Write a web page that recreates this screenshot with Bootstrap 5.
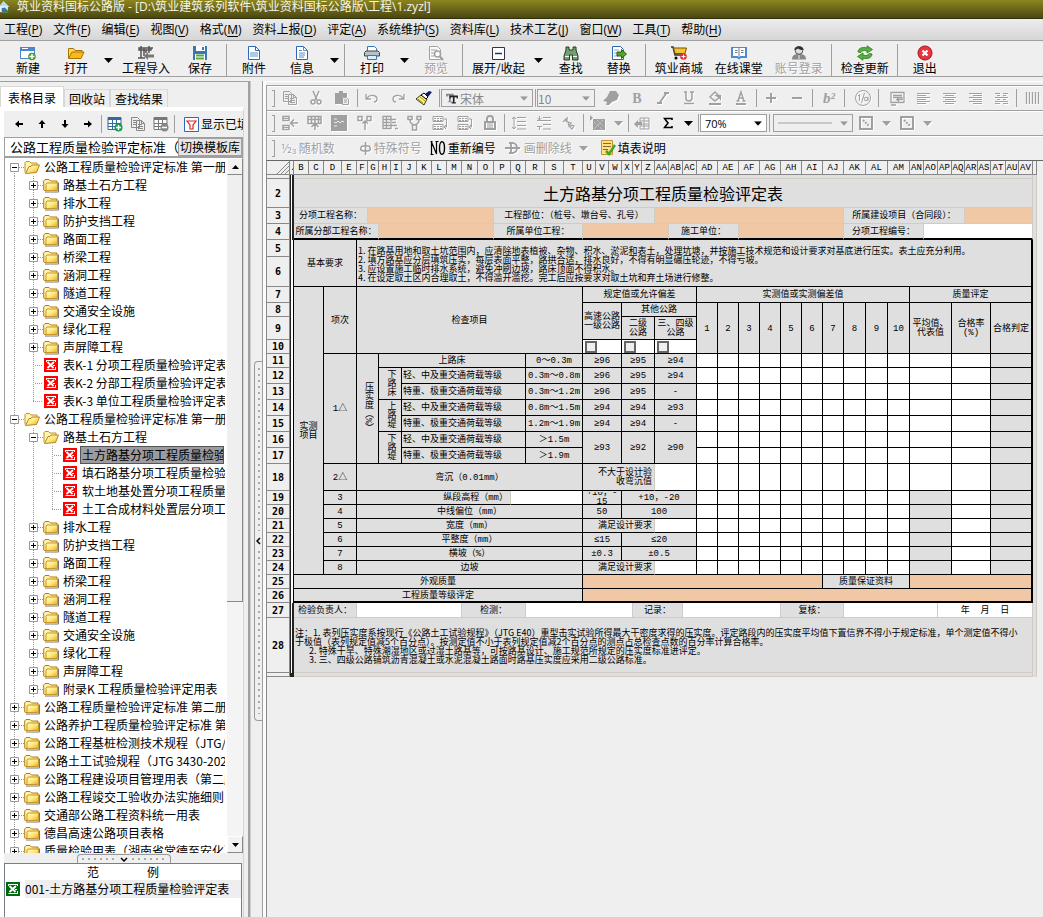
<!DOCTYPE html>
<html lang="zh-CN">
<head>
<meta charset="utf-8">
<meta name="viewport" content="width=device-width, initial-scale=1">
<title>筑业资料国标公路版</title>
<link href="https://cdn.jsdelivr.net/npm/bootstrap@5.3.0/dist/css/bootstrap.min.css" rel="stylesheet">
<style>
:root{--face:#efefef;--line:#a0a0a0;--cell:#dfdfdf;--fill:#f0c8a5;--soft:#d0ccc4}
body{font:12px/16px "Noto Sans CJK SC",sans-serif;color:#000;background:var(--face)}
svg{display:block;flex:none}
.app-title{height:19px;background:linear-gradient(#8b851f,#68631a 55%,#4a470f);border-bottom:1px solid #33310c;color:#f5f5e8;font:12px/13px "Open Sans","Noto Sans CJK SC",sans-serif;white-space:pre}
.app-menu{height:22px;background:linear-gradient(#ececec,#d6d6d6);border-bottom:1px solid var(--line);padding-left:4px;gap:11px}
.app-menu a{color:#000;text-decoration:none;font:12px/22px "Open Sans","Noto Sans CJK SC",sans-serif;white-space:nowrap}
.app-menu a u{text-underline-offset:2px}
.btn{--bs-btn-font-size:12px;--bs-btn-line-height:14px;--bs-btn-padding-x:0;--bs-btn-padding-y:0;--bs-btn-border-radius:0;--bs-btn-border-width:0;--bs-btn-color:#000;--bs-btn-disabled-color:#a0a0a0;--bs-btn-disabled-opacity:1;white-space:nowrap}
.main-bar{height:36px;padding:3px 0 0 4px;border-bottom:1px solid var(--line)}
.big-btn{min-width:48px;padding:0 6px}
.big-btn svg{margin:0 auto}
.big-btn:disabled{text-shadow:1px 1px 0 #fff}
.drop{width:16px;padding:0}
.vline{width:6px;flex:none;align-self:stretch;background:linear-gradient(var(--line),var(--line)) 2px 0/1px 100% no-repeat}
.vline.slim{width:4px}.vline.wide{width:8px}
.side{width:250px;flex:none;border-top:1px solid var(--line);border-right:2px solid var(--line);padding:4px 4px 0 0}
.side-tabs{height:21px;padding-left:0}
.side-tabs button{border:1px solid #d8d8d8;border-bottom:0;background:var(--face);font:12px/17px "Noto Sans CJK SC",sans-serif;padding:0 4px;height:18px;color:#000;white-space:nowrap}
.side-tabs .active{background:#fff;height:21px;padding:0 7px}
.side-page{border:1px solid #fff;border-width:4px 0 0 4px;border-right:1px solid #d4d4d4;background:var(--face)}
.side-tools{height:26px;margin-left:3px}
.side-tools button{width:23px;height:24px;flex:none}
.side-tools .filter-btn{width:auto;gap:2px}
.std{height:20px;border:1px solid var(--line);background:#fff}
.std input{border:0;min-width:0;font:13px/16px "Noto Sans CJK SC",sans-serif;padding:0 0 0 5px;outline:0}
.std button{border:1px solid var(--line);background:#e6e6e6;padding:0 1px}
.tree-box{border-left:1px solid var(--line);border-top:1px solid var(--line);background:#fff}
.tree{list-style:none;margin:0 2px 0 0;padding:0;width:0}
.tree li{height:18px;white-space:nowrap}
.unit{width:19px;height:18px;flex:none;display:flex;align-items:center;justify-content:center;background:repeating-linear-gradient(#999 0 1px,#fff 1px 2px) 9px 0/1px 100% no-repeat}
.unit.leaf{background:repeating-linear-gradient(#999 0 1px,#fff 1px 2px) 9px 0/1px 100% no-repeat,repeating-linear-gradient(90deg,#999 0 1px,#fff 1px 2px) 9px 9px/10px 1px no-repeat}
.unit.last{background:repeating-linear-gradient(#999 0 1px,#fff 1px 2px) 9px 0/1px 9px no-repeat,repeating-linear-gradient(90deg,#999 0 1px,#fff 1px 2px) 9px 9px/10px 1px no-repeat}
.unit.top-end{background:repeating-linear-gradient(#999 0 1px,#fff 1px 2px) 9px 9px/1px 9px no-repeat}
.node{padding:0 0 0 2px;margin-left:2px;height:18px;line-height:17px;color:#000;text-decoration:none}
.node.picked{background:#9b9ba0;border:1px solid #555;line-height:15px;padding-left:1px;width:144px;overflow:hidden}
.vscroll{width:16px;flex:none;background:#f4f4f4}
.vscroll button{width:16px;height:17px;background:#f2f2f2;border:1px solid #fff;border-right-color:#888;border-bottom-color:#888}
.vthumb{height:427px;background:var(--face);border-right:1px solid #888;border-bottom:1px solid #888}
.hgrip{height:10px}
.hgrip button{width:94px;height:9px;border:1px solid #999;border-bottom:0;border-radius:4px 4px 0 0;background:var(--face);color:#999}
.sample{height:54px;border:1px solid #777e8c;border-bottom:0;background:#fff;margin-right:1px}
.sample-row{height:18px}
.sample-row a{color:#000;text-decoration:none;background:#eee;margin-left:4px;line-height:18px}
.splitter{width:13px;flex:none;border-left:1px solid #ccc;border-right:1px solid var(--line);padding:84px 0 0 3px}
.splitter button{width:9px;height:360px;border:1px solid #999;border-right:0;border-radius:4px 0 0 4px;background:var(--face)}
.dots-v{width:2px;flex:1;margin:6px 0;background:repeating-linear-gradient(#aaa 0 2px,transparent 2px 6px)}
.dots-h{height:2px;flex:1;margin:0 4px;background:repeating-linear-gradient(90deg,#aaa 0 2px,transparent 2px 6px)}
.work{border-top:1px solid #fff;border-left:3px solid #fbfbfb;padding-top:3px;overflow:hidden}
.tool-row{height:25px;border-top:1px solid var(--line);border-left:1px solid var(--line);box-shadow:inset 0 1px #fff;padding-left:10px}
.tool-row::before{content:"";width:3px;height:17px;margin-left:-5px;margin-right:2px;border:1px solid var(--line);border-left:0;flex:none}
.tool-row .vline{margin:3px 0}
.b26{width:26px;flex:none}.b25{width:25px;flex:none}
.tool-row .btn svg{margin:0 auto}
.tool-row .btn:disabled{color:#a0a0a0}
.tool-row .btn:disabled svg{filter:drop-shadow(1px 1px 0 #fff)}
.letter-b{font:bold 14px/14px "Liberation Serif",serif}
.letter-sup{font:italic bold 15px/14px "Liberation Serif",serif}
.combo{height:18px;border:1px solid var(--line);padding:0 4px;flex:none;gap:2px}
.combo select{appearance:none;border:0;background:none;flex:1;min-width:0;padding:0;font:12px/15px "Noto Sans CJK SC",sans-serif;color:#888;opacity:1}
.combo.on{background:#fff}.combo.on select{color:#000;font:11px/15px "Open Sans",sans-serif}
.w-font{width:92px}.w-size{width:58px;margin-right:3px}.w-zoom{width:67px}.w-line{width:80px}
.word-btn{height:20px;gap:2px}
.word-btn:disabled{text-shadow:1px 1px 0 #fff}
.sheet-wrap{border-top:1px solid #666;border-left:1px solid #888}
.sheet{table-layout:fixed;width:769px;border-collapse:separate;border-spacing:0;font:9px/9px "Liberation Mono","Noto Sans CJK SC",monospace;background:var(--cell)}
.sheet td,.sheet th{padding:0;border:0 solid #000;border-width:0 1px 1px 0;text-align:center;vertical-align:middle;white-space:pre;overflow:hidden}
.sheet tbody td{padding-top:2px}
.sheet thead th{background:var(--face);border-color:#888;font-weight:400;height:14px;font-size:9px;padding-top:1px}
.sheet .rh{background:var(--face);border-color:#888;font:bold 10px/9px "DejaVu Sans Mono",monospace}
.sheet .edge{background:#fff;border-left:1px solid #222;border-bottom:0}
.sheet .edge.bold-edge{border-right:2px solid #222}
.sheet tr:last-child .edge{background:#222}
.sheet .loose{border-color:var(--soft)}
.sheet .tail{border-color:var(--soft);border-bottom:0}
.sheet .w{background:#fff}.sheet .o{background:var(--fill)}
.sheet .soft-r{border-right-color:var(--soft)}
.sheet .thick-b{border-bottom:2px solid #000}.sheet .thick-r{border-right:2px solid #000}
.sheet .ta-l{text-align:left;padding-left:1px}.sheet .ta-r{text-align:right;padding-right:2px}
.sheet .prose{font-family:"Noto Sans CJK SC",sans-serif}
.sheet .ttl{font:16px/18px "Noto Sans CJK SC",sans-serif}
.vert{writing-mode:vertical-rl;display:inline-block}
.clip{height:12px;display:flex;align-items:center;justify-content:center;overflow:hidden}
.sheet input{appearance:none;display:block;width:12px;height:12px;margin:0 0 0 2px;border:2px solid #666;background:var(--face)}
</style>
<script src="https://cdn.jsdelivr.net/npm/bootstrap@5.3.0/dist/js/bootstrap.bundle.min.js"></script>
</head>
<body class="vh-100 d-flex flex-column overflow-hidden">
<svg width="0" height="0" class="position-absolute" aria-hidden="true">
<defs>
<linearGradient id="gold" x1="0" y1="0" x2="1" y2="1"><stop offset="0" stop-color="#fffbd0"/><stop offset=".5" stop-color="#ffe97a"/><stop offset="1" stop-color="#e0a82c"/></linearGradient>
<symbol id="folder" viewBox="0 0 16 14"><path d="M2 13.500h13.500V4" stroke="#777" fill="none"/><path d="M.7 11.500v-9L2 1h4l1.500 1.500H14v9.500H1.500z" fill="url(#gold)" stroke="#b07d14"/><path d="M3 12V5.500l1-1h10.500v7.500z" fill="url(#gold)" stroke="#c8962a"/></symbol>
<symbol id="folder-open" viewBox="0 0 16 14"><path d="M1 12V2l1-1h3.500L7 2.500h6V6" fill="#fff6b0" stroke="#c09028"/><path d="M1.500 13 5 6h2l1-1.500h7.500L12.500 12z" fill="url(#gold)" stroke="#b88620"/></symbol>
<symbol id="sheet-x" viewBox="0 0 14 14"><path fill="currentColor" d="M0 0h14v14H0z"/><path d="M2.500 2.500h9" stroke="#fff"/><path d="M2.500 11.500h9M2.500 2v2M11.500 9v3M11.500 2v2" stroke="#fff"/><path d="m3.500 4 6 6M10 4l-6.500 6" stroke="#fff" stroke-width="1.800"/><path d="M9 7.500h2" stroke="#fff"/></symbol>
<symbol id="down" viewBox="0 0 9 5"><path d="M0 0h9L4.500 5z" fill="currentColor"/></symbol>
<symbol id="up" viewBox="0 0 9 5"><path d="M0 5h9L4.500 0z" fill="currentColor"/></symbol>
<symbol id="arrow" viewBox="0 0 8 8"><path d="M0 4 4 .5V3h4v2H4v2.500z" fill="#000"/></symbol>
<symbol id="pages" viewBox="0 0 16 16"><path d="M1.500 1.500h6l2 2v8h-8zM6.500 4.500h5l3 3v7h-8z" fill="#efefef" stroke="currentColor"/><path d="M3 4.500h3M3 6.500h3M3 8.500h3M8 8.500h4M8 10.500h5M8 12.500h5M11.500 4.500v3h3" stroke="currentColor" fill="none"/></symbol>
<symbol id="grid" viewBox="0 0 16 16"><path d="M1 1.500h13v12H1z" fill="#fff" stroke="currentColor"/><path fill="currentColor" d="M1 1h13v3H1z"/><path d="M1 7.500h13M1 10.500h13M5.500 4v9M9.500 4v9" stroke="currentColor"/></symbol>
<symbol id="boxcut" viewBox="0 0 16 16"><path d="M2 2h12v12H2z" fill="none" stroke="currentColor" stroke-width="2"/><path d="m5 5 6 6" stroke="currentColor" stroke-width="2" stroke-dasharray="2 1"/></symbol>
<symbol id="cells" viewBox="0 0 18 16"><path d="M2 1.500h6v4H2zM2 10.500h6v4H2zM10 8h7M13 4.500 9.500 8l3.500 3.500" fill="none" stroke="currentColor" stroke-width="1.500"/><path d="M2 3.500h6M2 12.500h6" stroke="currentColor"/></symbol>
<symbol id="cells2" viewBox="0 0 18 16"><path d="M2 1.500h13v7H2zM2 4.500h13M5.500 1v7M9 1v14M12.500 1v7M5.500 12 9 8.500l3.500 3.500" fill="none" stroke="currentColor" stroke-width="1.500"/></symbol>
<symbol id="branch" viewBox="0 0 18 16"><path d="M2 1.500h4v4H2zM11 1.500h4v4h-4zM6.500 8.500 9 6l3 2.500M9 7v8" fill="none" stroke="currentColor" stroke-width="1.500"/></symbol>
<symbol id="rows" viewBox="0 0 18 16"><path d="M2 1.500h10v5H2zM2 9.500h10v5H2z" fill="none" stroke="currentColor"/><path d="M3 3.500h9M3 5.500h9M3 11.500h9M3 13.500h9" stroke="currentColor" stroke-dasharray="2 1"/><path d="M13 4h2.500v8H13m2-2-2 2 2 2" fill="none" stroke="currentColor"/></symbol>
<symbol id="spacing" viewBox="0 0 16 16"><path d="M6 2.500h9M6 6.500h9M6 10.500h9M6 14h9M3 2v12M1 4l2-2 2 2M1 12l2 2 2-2" stroke="currentColor" fill="none"/></symbol>
</defs></svg>

<header class="app-title d-flex flex-shrink-0 overflow-hidden"><svg width="13" height="14" viewBox="0 0 15 14"><path d="M0 5 4 0l7 7H0z" fill="#b9dcf0"/><path d="M0 6h9v7H0z" fill="#e8eef4"/><path d="M5 13V7l6 6z" fill="#27933a"/><path d="M2 8h4v5H2z" fill="#3971b8"/></svg><span class="ms-1">筑业资料国标公路版 - [D:\筑业建筑系列软件\筑业资料国标公路版\工程\1.zyzl]</span></header>
<nav class="app-menu d-flex flex-shrink-0"><a href="#">工程(<u>P</u>)</a><a href="#">文件(<u>F</u>)</a><a href="#">编辑(<u>E</u>)</a><a href="#">视图(<u>V</u>)</a><a href="#">格式(<u>M</u>)</a><a href="#">资料上报(<u>D</u>)</a><a href="#">评定(<u>A</u>)</a><a href="#">系统维护(<u>S</u>)</a><a href="#">资料库(<u>L</u>)</a><a href="#">技术工艺(<u>J</u>)</a><a href="#">窗口(<u>W</u>)</a><a href="#">工具(<u>T</u>)</a><a href="#">帮助(<u>H</u>)</a></nav>

<div class="main-bar d-flex align-items-center flex-shrink-0" role="toolbar">
<button class="btn big-btn"><svg width="16" height="16" viewBox="0 0 16 16"><path d="M.5 2.500h14v11H.5z" fill="#fff" stroke="#4a86c8"/><path fill="#4a86c8" d="M0 2h15v4H0z"/><path d="M2 3.500h6" stroke="#fff"/><circle cx="12" cy="11.500" r="3.800" fill="#4f9a2e"/><path d="M12 9v5M9.500 11.500h5" stroke="#fff" stroke-width="1.500"/></svg>新建</button>
<button class="btn big-btn"><svg width="18" height="16" viewBox="0 0 18 16"><path d="M1.500 13V3.500h5l1.500 2h7V8" fill="#ffd84c" stroke="#a87408"/><path d="M1.500 13.500 5 7h12l-3 6.500z" fill="#f9b91a" stroke="#a87408"/></svg>打开</button>
<button class="btn drop" aria-label="打开选项"><svg class="mx-auto" width="9" height="5"><use href="#down"/></svg></button>
<button class="btn big-btn"><svg width="18" height="16" viewBox="0 0 18 16"><path d="M2 3h12v2H2zM4 1v12M12 1v7M1 13h7M7 3v8M14 3h2M9 5v3" stroke="#555" stroke-width="1.500" fill="none"/><path d="m7 11 4-4v2.500h6v3h-6V15z" fill="#777"/></svg>工程导入</button>
<button class="btn big-btn"><svg width="16" height="16" viewBox="0 0 16 16"><path d="M1 1h14v14H1z" fill="#3b76b5"/><path fill="#fff" d="M4 1h9v5H4zM3 9h10v6H3z"/><path fill="#3b76b5" d="M10 2h2v3h-2z"/><path d="M4 10.500h8M4 13.500h8" stroke="#5aa43a" stroke-width="2"/></svg>保存</button>
<span class="vline"></span>
<button class="btn big-btn"><svg width="16" height="16" viewBox="0 0 16 16"><path d="M2.500 1.500h7l4 4v9h-11z" fill="#fff" stroke="#2f68b0"/><path d="M9.500 1.500v4h4" fill="none" stroke="#2f68b0"/><path d="M4 7h8v5H4z" fill="#a8cbea"/></svg>附件</button>
<button class="btn big-btn"><svg width="16" height="16" viewBox="0 0 16 16"><path d="M2.500 1.500h7l4 4v9h-11z" fill="#fff" stroke="#2f68b0"/><path d="M9.500 1.500v4h4M5 5.500h3M5 8h6M5 10h6M5 12h5" fill="none" stroke="#5f8cc8"/></svg>信息</button>
<button class="btn drop" aria-label="信息选项"><svg class="mx-auto" width="9" height="5"><use href="#down"/></svg></button>
<span class="vline"></span>
<button class="btn big-btn"><svg width="16" height="16" viewBox="0 0 16 16"><path d="M3.500 7V1.500h7l2 2V7" fill="#fff" stroke="#3b76b5"/><path d="M.5 7.500 2 6h12l1.500 1.500V11H.5z" fill="#b8c0c8" stroke="#444"/><path d="M3.500 10.500h9v4h-9z" fill="#d8efff" stroke="#3b76b5"/></svg>打印</button>
<button class="btn drop" aria-label="打印选项"><svg class="mx-auto" width="9" height="5"><use href="#down"/></svg></button>
<button class="btn big-btn" disabled><svg width="16" height="16" viewBox="0 0 16 16"><path d="M1.500 1.500h8l3 3v10h-11zM3 5h6M3 8h3M3 11h3" fill="#fafafa" stroke="#a0a0a0"/><circle cx="9.500" cy="9" r="3" fill="#fff" stroke="#a0a0a0" stroke-width="1.500"/><path d="m11.500 11 3.500 4" stroke="#a0a0a0" stroke-width="2"/></svg>预览</button>
<span class="vline"></span>
<button class="btn big-btn"><svg width="16" height="16" viewBox="0 0 16 16"><path d="M2.500 2.500h12v12h-12z" fill="#fff" stroke="#334"/><path d="M5 8.500h7" stroke="#113a80" stroke-width="1.500"/></svg>展开/收起</button>
<button class="btn drop" aria-label="展开选项"><svg class="mx-auto" width="9" height="5"><use href="#down"/></svg></button>
<button class="btn big-btn"><svg width="16" height="16" viewBox="0 0 16 16"><path d="M3 2h3v3h4V2h3v3l2 6v4H9.500v-5h-3v5H1v-4l2-6z" fill="#6fa26f" stroke="#263a26"/><path d="M2 11.500h4M10 11.500h4" stroke="#fff"/></svg>查找</button>
<button class="btn big-btn"><svg width="16" height="16" viewBox="0 0 16 16"><path d="M1.500 1.500h8l3 3v10h-11z" fill="#fff" stroke="#2f68b0"/><path d="M3 5h5M3 8h3M3 11h4" stroke="#7da8dc"/><path d="m15.500 9-5 4.500V11H6V7h4.500V4.500z" fill="#52a62e" stroke="#27610f"/></svg>替换</button>
<span class="vline"></span>
<button class="btn big-btn"><svg width="18" height="16" viewBox="0 0 18 16"><path d="M1 2h2l2 8h10" fill="none" stroke="#333" stroke-width="1.500"/><path d="M3.500 3h13L15 8.500H5z" fill="#f5c330" stroke="#765000"/><circle cx="6" cy="13" r="1.500"/><circle cx="13.500" cy="11.500" r="3.300" fill="#e63030"/><path d="M11.500 11.500h4M13.500 9.500v4" stroke="#fff"/></svg>筑业商城</button>
<button class="btn big-btn"><svg width="16" height="16" viewBox="0 0 16 16"><path d="M0 2h16v11h-6l-2 1.500L6 13H0z" fill="#4a8cd2"/><path d="M2 3h5l1 1 1-1h5v8H9l-1 1-1-1H2z" fill="#fff"/><path d="M8 4v7M4 5.500h2.500M4 7.500h2.500M10 5.500h2.500M10 7.500h2.500" stroke="#777"/></svg>在线课堂</button>
<button class="btn big-btn" disabled><svg width="16" height="16" viewBox="0 0 16 16"><path d="M1 14.500C1 10 4 9 8 9s7 1 7 5.500z" fill="#888"/><circle cx="8" cy="5.500" r="3.800" fill="#ddd" stroke="#555"/><path d="M3.500 5C3 0 13 0 12.500 5 10 5.500 8 4 7 3.500 6 4 5 5 3.500 5z" fill="#333"/><path d="M8 10v4" stroke="#bbb" stroke-width="2"/></svg>账号登录</button>
<span class="vline"></span>
<button class="btn big-btn"><svg width="16" height="16" viewBox="0 0 16 16"><path d="M1 7C1 3 6 1.500 10 3V.8L15.500 4.500 10 8V6C7 5 4.500 5.500 4 7.500zM15 9c0 4-5 5.500-9 4v2.200L.5 11.500 6 8v2c3 1 5.500.5 6-1.500z" fill="#55b040" stroke="#2b7a1f" stroke-width=".8"/></svg>检查更新</button>
<span class="vline"></span>
<button class="btn big-btn"><svg width="16" height="16" viewBox="0 0 16 16"><circle cx="8" cy="8" r="7" fill="#e9343d" stroke="#a3141c"/><path d="M5.500 5.500 10.500 10.500M10.500 5.500 5.500 10.500" stroke="#fff" stroke-width="2.200"/></svg>退出</button>
</div>

<main class="d-flex flex-grow-1 pt-1" style="min-height:0">
<aside class="side d-flex flex-column">
<div class="side-tabs d-flex align-items-end flex-shrink-0" role="tablist"><button class="active" role="tab">表格目录</button><button role="tab">回收站</button><button role="tab">查找结果</button></div>
<div class="side-page d-flex flex-column flex-grow-1" style="min-height:0">
<div class="side-tools d-flex align-items-center overflow-hidden flex-shrink-0">
<button class="btn" aria-label="左"><svg class="mx-auto" width="8" height="8"><use href="#arrow"/></svg></button>
<button class="btn" aria-label="上"><svg class="mx-auto" width="8" height="8" viewBox="0 0 8 8"><path d="M4 0 .5 4H3v4h2V4h2.500z"/></svg></button>
<button class="btn" aria-label="下"><svg class="mx-auto" width="8" height="8" viewBox="0 0 8 8"><path d="M4 8 .5 4H3V0h2v4h2.500z"/></svg></button>
<button class="btn" aria-label="右"><svg class="mx-auto" width="8" height="8" viewBox="0 0 8 8"><path d="M8 4 4 .5V3H0v2h4v2.500z"/></svg></button>
<span class="vline slim my-1"></span>
<button class="btn" aria-label="增加表格"><svg class="mx-auto" width="16" height="16" viewBox="0 0 16 16"><use href="#grid" width="16" height="16" color="#35689c"/><circle cx="11.500" cy="11.500" r="4" fill="#1e9850"/><path d="M9 11.500h5M11.500 9v5" stroke="#fff" stroke-width="1.500"/></svg></button>
<button class="btn" aria-label="复制表格"><svg class="mx-auto" width="16" height="16" color="#888"><use href="#pages"/></svg></button>
<button class="btn" aria-label="删除表格"><svg class="mx-auto" width="16" height="16" viewBox="0 0 16 16"><use href="#grid" width="16" height="16" color="#777"/><circle cx="11.500" cy="11.500" r="4" fill="#888"/><path d="M9 11.500h5" stroke="#fff" stroke-width="1.500"/></svg></button>
<span class="vline slim my-1"></span>
<button class="btn filter-btn ms-2 d-flex align-items-center"><svg width="15" height="15" viewBox="0 0 15 15"><path d="M.5.500h14v14H.5z" fill="#fff" stroke="#2f68b0"/><path d="M3 4h9L9 8v4H6V8z" fill="none" stroke="#e62020" stroke-width="1.200"/></svg>显示已填</button>
</div>
<div class="std d-flex flex-shrink-0"><input class="flex-grow-1" aria-label="当前标准" value="公路工程质量检验评定标准（第一册）"><button class="btn">切换模板库</button></div>
<div class="tree-box d-flex flex-grow-1 overflow-hidden">
<ul class="tree flex-grow-1 overflow-hidden" id="tree"></ul>
<div class="vscroll d-flex flex-column"><button class="btn flex-shrink-0" aria-label="向上滚动"><svg class="mx-auto" width="7" height="4" viewBox="0 0 9 5"><use href="#up"/></svg></button><div class="vthumb"></div><button class="btn mt-auto flex-shrink-0" aria-label="向下滚动"><svg class="mx-auto" width="7" height="4" viewBox="0 0 9 5"><use href="#down"/></svg></button></div>
</div>
<div class="hgrip d-flex justify-content-center align-items-end flex-shrink-0"><button class="btn d-flex align-items-center" aria-label="折叠范例"><span class="dots-h"></span><svg width="8" height="5" viewBox="0 0 8 5"><path d="m1 1 3 3 3-3" stroke="#000" stroke-width="1.500" fill="none"/></svg><span class="dots-h"></span></button></div>
<div class="sample flex-shrink-0"><div class="d-flex justify-content-center gap-5"><span>范</span><span>例</span></div>
<div class="sample-row d-flex align-items-center text-nowrap"><svg color="#006a10" width="16" height="14"><use href="#sheet-x"/></svg><a href="#" class="flex-grow-1">001-土方路基分项工程质量检验评定表</a></div></div>
</div>
</aside>
<div class="splitter d-flex align-items-center"><button class="btn d-flex flex-column align-items-center" aria-label="折叠目录"><span class="dots-v"></span><svg width="5" height="8" viewBox="0 0 5 8"><path d="M4 1 1 4l3 3" stroke="#000" stroke-width="1.500" fill="none"/></svg><span class="dots-v"></span></button></div>

<section class="work flex-grow-1 d-flex flex-column" style="min-width:0">
<div class="tool-row d-flex align-items-center flex-shrink-0">
<button class="btn b26" disabled aria-label="复制"><svg width="18" height="16" viewBox="0 0 16 16"><use href="#pages"/></svg></button>
<button class="btn b26" disabled aria-label="剪切"><svg width="14" height="16" viewBox="0 0 14 16"><path d="M4 1l4 9M10 1 6 10" stroke="currentColor" stroke-width="1.500"/><circle cx="4" cy="12" r="2" fill="none" stroke="currentColor" stroke-width="1.500"/><circle cx="10" cy="12" r="2" fill="none" stroke="currentColor" stroke-width="1.500"/></svg></button>
<button class="btn b26" disabled aria-label="粘贴"><svg width="16" height="16" viewBox="0 0 16 16"><path d="M1 3h4V1h4v2h4v4H8v7H1z" fill="currentColor"/><path d="M8.500 7.500h4l2 2v5h-6zM10 10h3M10 12h3" fill="#eee" stroke="currentColor"/></svg></button>
<span class="vline slim"></span>
<button class="btn b26" disabled aria-label="撤销"><svg width="14" height="12" viewBox="0 0 14 12"><path d="M1 2v5h5M2 6c3-4 10-3 10 1 0 2-1 3-3 3" fill="none" stroke="currentColor" stroke-width="1.300"/></svg></button>
<button class="btn b26" disabled aria-label="重做"><svg width="14" height="12" viewBox="0 0 14 12"><path d="M13 2v5H8M12 6C9 2 2 3 2 7c0 2 1 3 3 3" fill="none" stroke="currentColor" stroke-width="1.300"/></svg></button>
<button class="btn b26" aria-label="格式刷"><svg width="18" height="16" viewBox="0 0 18 16"><path d="M1 9 6 5l6 4-3 6z" fill="#fff27a" stroke="#333"/><path d="m3 9 5 4m-3-6 5 4" stroke="#a49500"/><path d="m6 5 3-2 4 4-2 2z" fill="#fff" stroke="#000"/><path d="m10 4 4-3 3 1-4 5z" fill="#101a70"/></svg></button>
<span class="vline slim"></span>
<div class="combo w-font d-flex align-items-center"><svg width="12" height="11" viewBox="0 0 14 13"><path d="M0 1h9v3H7V3H5.500v7H7v1H2v-1h1.500V3H2v1H0z" fill="#888"/><path d="M4 3h10v3.500h-1.500V5h-2.500v6h1.500v1.500h-5V11H8V5H5.500v1.500H4z" fill="#222"/></svg><select disabled aria-label="字体"><option>宋体</option></select><svg width="8" height="5" color="#999" viewBox="0 0 9 5"><use href="#down"/></svg></div>
<span class="vline slim"></span>
<div class="combo w-size d-flex align-items-center ps-0"><select disabled aria-label="字号"><option>10</option></select><svg width="8" height="5" color="#999" viewBox="0 0 9 5"><use href="#down"/></svg></div>
<button class="btn b26" disabled aria-label="底色"><svg width="16" height="16" viewBox="0 0 16 16"><path d="M4 7 7 1h6l3 4-2 5-5 2-3 3H3l1-3-4-1z" fill="currentColor"/></svg></button>
<button class="btn b26" disabled aria-label="加粗"><b class="letter-b">B</b></button>
<button class="btn b26" disabled aria-label="倾斜"><svg width="14" height="14" viewBox="0 0 14 14"><path d="M8 2h5M1 12h5M10.500 2 3.500 12" stroke="currentColor" stroke-width="1.800"/></svg></button>
<button class="btn b26" disabled aria-label="下划线"><svg width="12" height="14" viewBox="0 0 12 14"><path d="M1 1h3M7 1h4M3 1v6q0 3 3 3t3-3V1M1 12.500h10" fill="none" stroke="currentColor" stroke-width="1.500"/></svg></button>
<button class="btn b26" disabled aria-label="填充颜色"><svg width="15" height="16" viewBox="0 0 15 16"><path d="m2 7 5-5 5 5-5 4z" fill="none" stroke="currentColor" stroke-width="1.500"/><path d="M6 5h7v6l-2-3zM1 13h12v2H1z" fill="currentColor"/></svg></button>
<button class="btn b26" disabled aria-label="字体颜色"><svg width="12" height="16" viewBox="0 0 12 16"><path d="m3 11 3-9 3 9M4 8h4M1.500 11h3M7.500 11h3" fill="none" stroke="currentColor" stroke-width="1.500"/><path d="M1 13h10v2H1z" fill="currentColor"/></svg></button>
<span class="vline slim"></span>
<button class="btn b26" disabled aria-label="增大"><svg width="12" height="12" viewBox="0 0 12 12"><path d="M6 1v10M1 6h10" stroke="currentColor" stroke-width="2"/></svg></button>
<button class="btn b26" disabled aria-label="减小"><svg width="12" height="12" viewBox="0 0 12 12"><path d="M1 6h10" stroke="currentColor" stroke-width="2"/></svg></button>
<span class="vline"></span>
<button class="btn b26" disabled aria-label="上标"><i class="letter-sup">b²</i></button>
<span class="vline wide"></span>
<button class="btn b26" disabled aria-label="分数"><svg width="18" height="18" viewBox="0 0 18 18"><circle cx="9" cy="9" r="7.500" fill="none" stroke="currentColor"/><path d="M4 7l1.500-1.500V12M10.500 4l-3 10" stroke="currentColor" fill="none"/><circle cx="12" cy="10" r="1.800" fill="none" stroke="currentColor"/><path d="M14 8v4" stroke="currentColor"/></svg></button>
<span class="vline wide"></span>
<button class="btn b26" disabled aria-label="换行"><svg width="15" height="15" viewBox="0 0 15 15"><path d="M1 1.500h13v10H1zM3 4.500h9M3 6.500h9v2H7l2-2M7 8.500l2 2M1 14h5" fill="none" stroke="currentColor" stroke-width="1.300"/></svg></button>
<button class="btn b26" disabled aria-label="左对齐"><svg width="15" height="13" viewBox="0 0 15 13"><path d="M1 1.500h13M1 3.500h9M1 5.500h13M1 7.500h9M1 9.500h13M1 11.500h9" stroke="currentColor"/></svg></button>
<button class="btn b26" disabled aria-label="居中"><svg width="15" height="13" viewBox="0 0 15 13"><path d="M1 1.500h13M3 3.500h9M1 5.500h13M3 7.500h9M1 9.500h13M3 11.500h9" stroke="currentColor"/></svg></button>
<button class="btn b26" disabled aria-label="右对齐"><svg width="15" height="13" viewBox="0 0 15 13"><path d="M1 1.500h13M5 3.500h9M1 5.500h13M5 7.500h9M1 9.500h13M5 11.500h9" stroke="currentColor"/></svg></button>
<button class="btn b26" disabled aria-label="两端对齐"><svg width="15" height="13" viewBox="0 0 15 13"><path d="M1 1.500h5M9 1.500h5M3 3.500h3M9 3.500h3M1 5.500h13M3 7.500h3M9 7.500h3M1 9.500h13M1 11.500h5M9 11.500h5" stroke="currentColor"/></svg></button>
<span class="vline"></span>
<button class="btn b26" disabled aria-label="分散"><svg width="16" height="13" viewBox="0 0 16 13"><path d="M1.500 0v12M4.500 0v12M7.500 0v12M10.500 0v12M13.500 0v12" stroke="currentColor" stroke-width="1.300"/></svg></button>
</div>
<div class="tool-row d-flex align-items-center flex-shrink-0">
<button class="btn b25" disabled aria-label="插入单元格"><svg width="18" height="16"><use href="#cells"/></svg></button>
<button class="btn b25" disabled aria-label="插入行"><svg width="18" height="16"><use href="#cells2"/></svg></button>
<button class="btn b25" disabled aria-label="公式"><svg width="17" height="16" viewBox="0 0 17 16"><path fill="currentColor" d="M0 0h16v16H0z"/><path d="M3 4h3M3 11h3M3 7l2 1 2-2 2 2 2-2 2 1" stroke="#eee" fill="none"/></svg></button>
<button class="btn b25" disabled aria-label="拆分"><svg width="18" height="16"><use href="#branch"/></svg></button>
<button class="btn b25" disabled aria-label="删除单元格"><svg width="18" height="16" viewBox="0 0 18 16"><path d="M2 1.500h8v12H2zM2 4.500h13M2 7.500h7M9 10.500h7M2 10.500h7M5.500 1v12M11 7.500h4M14 13.500h3" fill="none" stroke="currentColor" stroke-width="1.300"/></svg></button>
<button class="btn b25" disabled aria-label="合并"><svg width="18" height="16" viewBox="0 0 18 16"><path d="M2 1.500h4v3H2zM11 1.500h4v3h-4zM4 5q0 4 4.500 5Q13 9 13 5M6.500 10h4v5h-4z" fill="none" stroke="currentColor" stroke-width="1.500"/></svg></button>
<button class="btn b25" disabled aria-label="下移"><svg width="18" height="16"><use href="#rows"/></svg></button>
<button class="btn b25" disabled aria-label="复制行"><svg width="18" height="16"><use href="#rows"/></svg></button>
<button class="btn b25" disabled aria-label="锁定"><svg width="14" height="16" viewBox="0 0 14 16"><path d="M4 7V4q0-3 3-3t3 3v3M2 7h10v7H2z" fill="none" stroke="currentColor" stroke-width="2"/><path d="M5 8v5M7 8v5M9 8v5" stroke="currentColor"/></svg></button>
<span class="vline slim"></span>
<button class="btn b25" disabled aria-label="行距"><svg width="16" height="16"><use href="#spacing"/></svg></button>
<button class="btn b25" disabled aria-label="间距"><svg width="16" height="16" viewBox="0 0 16 16"><path d="M7 2.500h8M1 5.500h14M7 9.500h8M1 11.500h5M7 14h8M3.500 1v4l-2-2m2 2 2-2M3.500 15v-3" stroke="currentColor" fill="none"/></svg></button>
<button class="btn b25" disabled aria-label="文字方向"><svg width="14" height="15" viewBox="0 0 14 15"><path d="m1 6 4-4v4M3 4l2 2M6 6l3 1-2 3zM10 9l2 1-2 3-2-2z" fill="none" stroke="currentColor" stroke-width="1.300"/></svg></button>
<span class="vline slim"></span>
<button class="btn b25" disabled aria-label="图片"><svg width="17" height="16" viewBox="0 0 17 16"><path d="M1 0v6l3-3z" fill="currentColor"/><path d="M4 4h12v11H4z" fill="currentColor"/><path d="m5 7 9 8M8 5l7 7M14 5l-9 9" stroke="#ddd" stroke-dasharray="1 1"/></svg></button>
<button class="btn drop" disabled aria-label="图片选项"><svg width="9" height="5"><use href="#down"/></svg></button>
<span class="vline slim"></span>
<button class="btn b25" disabled aria-label="重算"><svg width="17" height="16" viewBox="0 0 17 16"><path d="M6 3h9v11H6zM6 6h9M6 9h9M6 11h9M10 3v11" fill="none" stroke="currentColor"/><path d="M0 9 4 5v2h4v3H4v3z" fill="currentColor"/></svg></button>
<button class="btn b25" aria-label="求和"><svg width="10" height="12" viewBox="0 0 10 12"><path d="M9 3V1.500H1.500L5 6l-3.500 4.500H9V9" fill="none" stroke="#000" stroke-width="1.600"/></svg></button>
<button class="btn drop" aria-label="求和选项"><svg class="mx-auto" width="9" height="5"><use href="#down"/></svg></button>
<span class="vline slim"></span>
<div class="combo on w-zoom d-flex align-items-center"><select aria-label="缩放"><option>70%</option></select><svg width="8" height="5" viewBox="0 0 9 5"><use href="#down"/></svg></div>
<span class="vline"></span>
<div class="combo w-line d-flex align-items-center"><svg width="54" height="2"><path d="M0 1h54" stroke="#a0a0a0"/></svg><select disabled aria-label="线型"><option></option></select><svg width="8" height="5" color="#999" viewBox="0 0 9 5"><use href="#down"/></svg></div>
<button class="btn b25" disabled aria-label="边框"><svg width="16" height="16"><use href="#boxcut"/></svg></button>
<button class="btn drop" disabled aria-label="边框选项"><svg width="9" height="5"><use href="#down"/></svg></button>
<button class="btn b25" disabled aria-label="斜线"><svg width="16" height="16"><use href="#boxcut"/></svg></button>
<button class="btn drop" disabled aria-label="斜线选项"><svg width="9" height="5"><use href="#down"/></svg></button>
</div>
<div class="tool-row d-flex align-items-center flex-shrink-0">
<button class="btn word-btn d-flex align-items-center ms-1" disabled><span>½₃</span>随机数</button>
<button class="btn word-btn d-flex align-items-center ms-4" disabled><svg width="13" height="13" viewBox="0 0 13 13"><path d="M6.500 0v13M3 4q-4 5 3.500 5T10 4H3" fill="none" stroke="currentColor" stroke-width="1.500"/></svg>特殊符号</button>
<button class="btn word-btn d-flex align-items-center ms-2"><svg width="16" height="14" viewBox="0 0 15 14"><path d="M1 14V1l5 12V0M0 .5h2M0 13.500h3M5 .5h3" fill="none" stroke="#000" stroke-width="1.200"/><ellipse cx="11.500" cy="7" rx="2.500" ry="6.200" fill="none" stroke="#000" stroke-width="1.400"/></svg>重新编号</button>
<button class="btn word-btn d-flex align-items-center ms-2" disabled><svg width="18" height="14" viewBox="0 0 16 14"><path d="M4 2h4q4 1 4 5t-4 5H4M6 2v10M0 7h15" fill="none" stroke="currentColor" stroke-width="1.800"/></svg>画删除线</button>
<button class="btn drop ms-1" disabled aria-label="删除线选项"><svg width="9" height="5"><use href="#down"/></svg></button>
<button class="btn word-btn d-flex align-items-center ms-2"><svg width="16" height="16" viewBox="0 0 16 16"><path d="M1.500.5h11v14h-11z" fill="#ffdf87" stroke="#c89428"/><path d="M3 3.500h8M3 6.500h8M3 9.500h5" stroke="#8c6a20"/><path d="m6 11 3 3 6-9" fill="none" stroke="#41a629" stroke-width="2.500"/></svg>填表说明</button>
</div>
<div class="sheet-wrap flex-grow-1 overflow-hidden"><table class="sheet" id="sheet"></table></div>
</section>
</main>

<script>
// Catalogue tree: [level, kind, text]; kinds are open, closed and doc
const subs = ['排水工程','防护支挡工程','路面工程','桥梁工程','涵洞工程','隧道工程','交通安全设施','绿化工程','声屏障工程'];
const nodes = [
  [0,'open','公路工程质量检验评定标准 第一册'],
  [1,'closed','路基土石方工程'], ...subs.map(s => [1,'closed',s]),
  [1,'doc','表K-1 分项工程质量检验评定表'],[1,'doc','表K-2 分部工程质量检验评定表'],[1,'doc','表K-3 单位工程质量检验评定表','last'],
  [0,'open','公路工程质量检验评定标准 第一册'],
  [1,'open','路基土石方工程'],
  [2,'doc','土方路基分项工程质量检验评定表','picked'],[2,'doc','填石路基分项工程质量检验评定表'],
  [2,'doc','软土地基处置分项工程质量检验评定表'],[2,'doc','土工合成材料处置层分项工程质量检验','last'],
  ...subs.map(s => [1,'closed',s]), [1,'closed','附录K 工程质量检验评定用表'],
  ...['公路工程质量检验评定标准 第二册','公路养护工程质量检验评定标准 第一册','公路工程基桩检测技术规程（JTG/T','公路土工试验规程（JTG 3430-2020）','公路工程建设项目管理用表（第二版）','公路工程竣交工验收办法实施细则','交通部公路工程资料统一用表','德昌高速公路项目表格','质量检验用表（湖南省常德至安化）'].map(s => [0,'closed',s])
];
const box = plus => `<svg width="19" height="9" viewBox="0 0 19 9"><path d="M14 4.500h5" stroke="#999" stroke-dasharray="1 1"/><path d="M5.500.5h8v8h-8z" fill="#fff" stroke="#999"/><path d="M7 4.500h5${plus ? 'M9.500 2v5' : ''}" stroke="#000"/></svg>`;
document.getElementById('tree').innerHTML = nodes.map(([lv, kind, text, flag], i) => {
  let h = '<span class="unit"></span>'.repeat(lv);
  if (kind === 'doc') {
    h += `<span class="unit leaf${flag === 'last' ? ' last' : ''}"></span><svg width="16" height="14" color="#f00"><use href="#sheet-x"/></svg>`;
  } else {
    h += `<span class="unit${i === 0 ? ' top-end' : ''}">${box(kind === 'closed')}</span><svg width="16" height="15"><use href="#${kind === 'open' ? 'folder-open' : 'folder'}"/></svg>`;
  }
  return `<li class="d-flex align-items-center">${h}<a href="#" class="node${flag === 'picked' ? ' picked' : ''}">${text}</a></li>`;
}).join('');

// Column names and widths of the sheet
const names = ['','.','B','C','D','E','F','G','H','I','J','K','L','M','N','O','P','Q','R','S','T','U','V','W','X','Y','Z','AA','AB','AC','AD','AE','AF','AG','AH','AI','AJ','AK','AL','AM','AN','AO','AP','AQ','AR','AS','AT','AU','AV',''];
const widths = [23,4,15,15,18,15,11,11,12,11,15,15,15,15,16,16,17,15,19,19,19,13,13,13,11,9,13,14,14,14,21,21,21,21,21,21,21,22,22,22,14,14,14,13,13,13,15,13,14,4];
const c = (t, cs = 1, k = '', rs = 1) => `<td${cs > 1 ? ` colspan="${cs}"` : ''}${rs > 1 ? ` rowspan="${rs}"` : ''}${k ? ` class="${k}"` : ''}>${t}</td>`;
const v = (t, rs) => c(`<span class="vert">${t}</span>`, 2, 'p-0', rs);
const rep = (n, s) => s.repeat(n);
const blank = mid => rep(10, c('', 1, 'w')) + c('', 3, mid) + c('', 3, 'w') + c('', 3, 'thick-r');
const tick = n => c(`<input type="checkbox" aria-label="${n}">`, 3, 'w p-0');
const three = (a, b, d, rs = 1) => c(a, 3, '', rs) + c(b, 3, '', rs) + c(d, 3, '', rs);
const L = 'loose';
const rows = [
 ['',4,c('',47,L)],
 [2,29,c('土方路基分项工程质量检验评定表',47,L+' ttl p-0')],
 [3,16,c('分项工程名称：',5,L)+c('',9,L+' o')+c('工程部位：（桩号、墩台号、孔号）',11,L)+c('',10,L+' o')+c('所属建设项目（合同段）：',7,L)+c('',5,L+' o')],
 [4,16,c('所属分部工程名称：',6,'thick-b soft-r')+c('',8,'thick-b soft-r o')+c('所属单位工程：',5,'thick-b soft-r')+c('',7,'thick-b soft-r o')+c('施工单位：',4,'thick-b soft-r')+c('',5,'thick-b soft-r o')+c('分项工程编号：',4,'thick-b soft-r')+c('',8,'thick-b soft-r w')],
 [5,17,c('基本要求',4,'',2)+c('1. 在路基用地和取土坑范围内，应清除地表植被、杂物、积水、淤泥和表土，处理坑塘，并按施工技术规范和设计要求对基底进行压实。表土应充分利用。\n2. 填方路基应分层填筑压实，每层表面平整，路拱合适，排水良好，不得有明显碾压轮迹，不得亏坡。\n3. 应设置施工临时排水系统，避免冲刷边坡，路床顶面不得积水。\n4. 在设定取土区内合理取土，不得滥开滥挖。完工后应按要求对取土坑和弃土场进行修整。',43,'prose ta-l thick-r',2)],
 [6,30,''],
 [7,16,c('实测\n项目',2,'',18)+c('项次',2,'',4)+c('检查项目',15,'',4)+c('规定值或允许偏差',9)+c('实测值或实测偏差值',10)+c('质量评定',9,'thick-r')],
 [8,14,c('高速公路\n一级公路',3,'',2)+c('其他公路',6)+[1,2,3,4,5,6,7,8,9,10].map(n=>c(n,1,'',3)).join('')+c('平均值、\n代表值',3,'',3)+c('合格率\n(%)',3,'',3)+c('合格判定',3,'thick-r',3)],
 [9,23,c('二级\n公路',3)+c('三、四级\n公路',3)],
 [10,14,tick('高速公路一级公路')+tick('二级公路')+tick('三、四级公路')],
 [11,14,c('1△',2,'',7)+v('压实度（%）',7)+c('上路床',10)+c('0～0.3m',3)+three('≥96','≥95','≥94')+blank('w')],
 [12,16,v('下路床',2)+c('轻、中及重交通荷载等级',8,'ta-l')+c('0.3m～0.8m',3)+three('≥96','≥95','≥94')+blank('w')],
 [13,16,c('特重、极重交通荷载等级',8,'ta-l')+c('0.3m～1.2m',3)+three('≥96','≥95','-')+blank('w')],
 [14,16,v('上路堤',2)+c('轻、中及重交通荷载等级',8,'ta-l')+c('0.8m～1.5m',3)+three('≥94','≥94','≥93')+blank('w')],
 [15,16,c('特重、极重交通荷载等级',8,'ta-l')+c('1.2m～1.9m',3)+three('≥94','≥94','-')+blank('w')],
 [16,16,v('下路堤',2)+c('轻、中及重交通荷载等级',8,'ta-l')+c('＞1.5m',3)+three('≥93','≥92','≥90',2)+blank('w')],
 [17,16,c('特重、极重交通荷载等级',8,'ta-l')+c('＞1.9m',3)+blank('w')],
 [18,27,c('2△',2)+c('弯沉（0.01mm）',15)+c('不大于设计验\n收弯沉值',6,'ta-r soft-r')+c('',3,'w')+blank('w')],
 [19,14,c('3',2)+c('纵段高程（mm）',11,'ta-r soft-r')+c('',4,'w')+c('<div class="clip">+10，-\n15</div>',3,'p-0')+c('+10，-20',6)+blank('')],
 [20,14,c('4',2)+c('中线偏位（mm）',15)+c('50',3)+c('100',6)+blank('')],
 [21,14,c('5',2)+c('宽度（mm）',15)+c('满足设计要求',6,'ta-r soft-r')+c('',3,'w')+blank('')],
 [22,14,c('6',2)+c('平整度（mm）',15)+c('≤15',3)+c('≤20',6)+blank('')],
 [23,14,c('7',2)+c('横坡（%）',15)+c('±0.3',3)+c('±0.5',6)+blank('')],
 [24,14,c('8',2)+c('边坡',15)+c('满足设计要求',6,'ta-r soft-r')+c('',3,'w')+blank('')],
 [25,14,c('外观质量',19)+c('',15,'o')+c('质量保证资料',4)+c('',9,'o thick-r')],
 [26,14,c('工程质量等级评定',19,'thick-b')+c('',28,'o thick-b thick-r')],
 [27,15,c('检验负责人：',4,L)+c('',8,L+' w')+c('检测：',4,L)+c('',7,L+' w')+c('记录：',4,L)+c('',5,L+' w')+c('复核：',3,L)+c('',5,L+' w')+c('年  月  日',7,L+' w')],
 [28,55,c('注：1. 表列压实度系按现行《公路土工试验规程》（JTG E40）重型击实试验所得最大干密度求得的压实度。评定路段内的压实度平均值下置信界不得小于规定标准，单个测定值不得小\n于极值（表列规定值减5个百分点）。按测定值不小于表列规定值减2个百分点的测点占总检查点数的百分率计算合格率。\n       2. 特殊干旱、特殊潮湿地区或过湿土路基等，可按路基设计、施工规范所规定的压实度标准进评定。\n       3. 三、四级公路铺筑沥青混凝土或水泥混凝土路面时路基压实度应采用二级公路标准。',47,L+' prose ta-l')],
 ['',4,c('',47,L)]
];
document.getElementById('sheet').innerHTML =
 '<colgroup>' + widths.map(w => `<col style="width:${w}px">`).join('') + '</colgroup><thead><tr>' +
 names.map((n, i) => i ? `<th>${n}</th>` : '<th><svg width="22" height="12" viewBox="0 0 22 12"><path d="m10 12 12-12M14 12l8-8M18 12l4-4" stroke="#888"/></svg></th>').join('') + '</tr></thead><tbody>' +
 rows.map(([n, h, cells]) => `<tr style="height:${h}px"><th class="rh">${n}</th><td class="edge${n >= 5 && n <= 26 ? '' : ' bold-edge'}"></td>${cells}<td class="tail"></td></tr>`).join('') + '</tbody>';
</script>
</body>
</html>
